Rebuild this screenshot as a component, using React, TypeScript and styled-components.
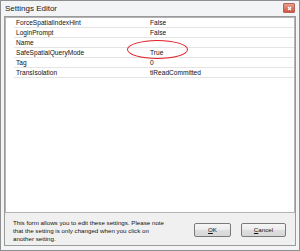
import React from 'react';
import styled, { createGlobalStyle } from 'styled-components';

const GlobalStyle = createGlobalStyle`
  html, body {
    margin: 0;
    padding: 0;
    background: #ffffff;
  }
  body {
    font-family: "Liberation Sans", Arial, sans-serif;
  }
`;

interface Setting {
  name: string;
  value: string;
}

const settings: Setting[] = [
  { name: 'ForceSpatialIndexHint', value: 'False' },
  { name: 'LoginPrompt', value: 'False' },
  { name: 'Name', value: '' },
  { name: 'SafeSpatialQueryMode', value: 'True' },
  { name: 'Tag', value: '0' },
  { name: 'TransIsolation', value: 'tiReadCommitted' }
];

const App: React.FC = () => {
  return (
    <>
      <GlobalStyle />
      <Window>
        <TitleBar>
          <Title>Settings Editor</Title>
          <CloseButton>
            <svg width="5" height="5" viewBox="0 0 5 5">
              <path d="M1 1L4 4M4 1L1 4" stroke="#ffffff" strokeWidth="1.2" />
            </svg>
          </CloseButton>
        </TitleBar>
        <Client>
          <Grid>
            {settings.map((s) => (
              <Row key={s.name}>
                <NameCell>{s.name}</NameCell>
                <ValueCell>{s.value}</ValueCell>
              </Row>
            ))}
            <Highlight />
          </Grid>
          <Footer>
            <Hint>
              This form allows you to edit these settings. Please note
              <br />
              that the setting is only changed when you click on
              <br />
              another setting.
            </Hint>
            <Buttons>
              <Button $width={37}>
                <u>O</u>K
              </Button>
              <Button $width={45}>
                <u>C</u>ancel
              </Button>
            </Buttons>
          </Footer>
        </Client>
      </Window>
    </>
  );
};

const Window = styled.div`
  width: 300px;
  height: 251px;
  box-sizing: border-box;
  display: flex;
  flex-direction: column;
  background: #f3f4f6;
  border: 1px solid #8e8f91;
  padding: 0 3px 4px 3px;
`;

const TitleBar = styled.div`
  height: 15px;
  display: flex;
  align-items: flex-start;
  justify-content: space-between;
  padding: 0 1px 0 1px;
`;

const Title = styled.span`
  font-size: 8px;
  line-height: 9px;
  color: #1a1a1a;
  margin-top: 3px;
`;

const CloseButton = styled.div`
  width: 10px;
  height: 8px;
  margin-top: 2px;
  border-radius: 1px;
  border: 1px solid #b0645a;
  background: linear-gradient(#ec9e8e, #d2533f);
  display: flex;
  align-items: center;
  justify-content: center;
`;

const Client = styled.div`
  flex: 1;
  display: flex;
  flex-direction: column;
  border: 1px solid #9a9a9a;
  background: #f0f0f0;
`;

const Grid = styled.div`
  position: relative;
  flex: 1;
  background: #ffffff;
  border: 1px solid #b4b4b4;
  padding: 0 0 0 8px;
`;

const Row = styled.div`
  display: grid;
  grid-template-columns: 136px 1fr;
  height: 9px;
  border-bottom: 1px solid #e4e4e4;
  font-size: 6.6px;
  line-height: 9px;
  color: #111111;
`;

const NameCell = styled.div`
  padding-left: 2px;
  white-space: nowrap;
  overflow: hidden;
`;

const ValueCell = styled.div`
  white-space: nowrap;
`;

const Highlight = styled.div`
  position: absolute;
  left: 121px;
  top: 22px;
  width: 61px;
  height: 19px;
  box-sizing: border-box;
  border: 1.3px solid #e0202a;
  border-radius: 50%;
`;

const Footer = styled.div`
  height: 32px;
  box-sizing: border-box;
  display: flex;
  align-items: flex-start;
  justify-content: space-between;
  padding: 6px 9px 0 8px;
  background: #f0f0f0;
`;

const Hint = styled.div`
  font-size: 6.2px;
  line-height: 8px;
  color: #111111;
  white-space: nowrap;
`;

const Buttons = styled.div`
  display: flex;
  gap: 10px;
  margin-top: 4px;
`;

const Button = styled.div<{ $width: number }>`
  width: ${(p) => p.$width}px;
  height: 14px;
  box-sizing: border-box;
  border: 1px solid #7a7a7a;
  border-radius: 2px;
  background: linear-gradient(#f6f6f6 0%, #ececec 50%, #dfdfdf 51%, #d6d6d6 100%);
  font-size: 6.2px;
  line-height: 12px;
  text-align: center;
  color: #111111;
`;

export default App;
